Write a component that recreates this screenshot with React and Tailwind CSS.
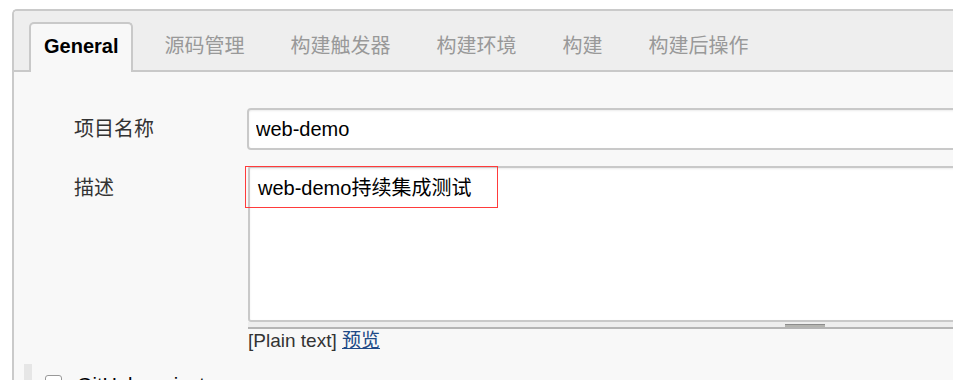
const tabs = ["源码管理", "构建触发器", "构建环境", "构建", "构建后操作"];

export default function App() {
  return (
    <div className="w-[953px] h-[380px] overflow-hidden bg-white pt-[9px] pl-[12px] font-['Liberation_Sans','Noto_Sans_CJK_SC',sans-serif] text-[20px] leading-[24px]">
      <div className="w-[1300px] h-[400px] border-t-2 border-l-2 border-[#cacaca] rounded-tl-[5px] bg-[#f8f8f8]">
        {/* tab bar */}
        <div className="flex items-end h-[61px] bg-[#eee] border-b-2 border-[#c9c9c9] rounded-tl-[3px] pl-[15px]">
          <div className="h-[50px] -mb-[2px] px-[13px] pt-[10px] border-2 border-b-0 border-[#c9c9c9] rounded-t-[5px] bg-[#f8f8f8] font-bold text-black">
            General
          </div>
          <div className="flex ml-[8px]">
            {tabs.map(t => (
              <div key={t} className="h-[48px] pt-[12px] px-[23px] text-[#999]">{t}</div>
            ))}
          </div>
        </div>

        {/* form */}
        <div className="pt-[36px]">
          <div className="pl-[60px] grid grid-cols-[173px_1fr] gap-y-[16px]">
            <div className="self-center text-[#333]">项目名称</div>
            <input
              defaultValue="web-demo"
              className="w-[1100px] h-[42px] border-2 border-[#c9c9c9] rounded-[4px] bg-white px-[7px] text-black outline-none shadow-[inset_0_1px_2px_rgba(0,0,0,0.08)]"
            />
            <div className="pt-[10px] text-[#333]">描述</div>
            <div className="ml-px">
              <div className="relative w-[1114px]">
                <textarea
                  readOnly
                  defaultValue="web-demo持续集成测试"
                  className="block w-full h-[156px] resize-none border-2 border-[#c9c9c9] rounded-[3px] bg-white pt-[8px] px-[8px] text-black outline-none shadow-[inset_0_1px_2px_rgba(0,0,0,0.08)]"
                />
                <div className="absolute left-[-3px] top-0 w-[253px] h-[42px] border border-[#ff3b3b]" />
              </div>
              <div className="w-[1114px] h-[7px] bg-[#eee] border-b-2 border-[#b5b5b5] flex justify-center">
                <div className="w-[40px] h-[3px] mt-[2px] border-t border-[#8c8c8c] bg-[#b4b4b0]" />
              </div>
              <div className="text-[19px] leading-[23px] text-[#333]">
                [Plain text] <a href="#" className="text-[#204a87] underline">预览</a>
              </div>
            </div>
          </div>

          {/* next section */}
          <div className="ml-[10px] mt-[12px] border-l-[8px] border-[#e6e6e6] pl-[13px] pt-[11px] flex items-start h-[40px]">
            <span className="w-[17px] h-[17px] rounded-[3px] border border-[#999] bg-white" />
            <span className="ml-[15px] -mt-[2px] text-black">GitHub project</span>
          </div>
        </div>
      </div>
    </div>
  );
}
